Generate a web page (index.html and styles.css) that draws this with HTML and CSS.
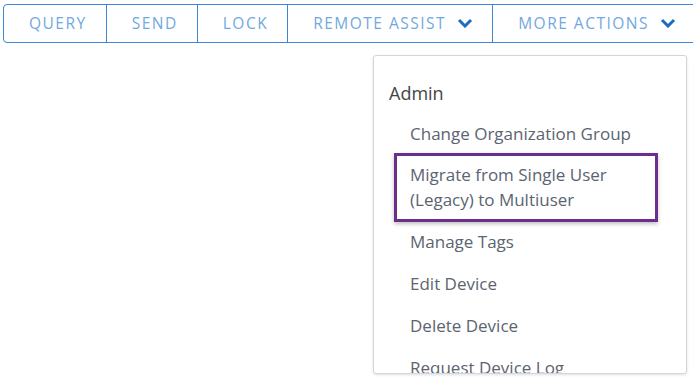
FILE: index.html
```html
<!DOCTYPE html>
<html lang="en">
<head>
  <meta charset="UTF-8">
  <meta name="viewport" content="width=device-width, initial-scale=1.0">
  <title>Device Actions</title>
  <link rel="stylesheet" href="styles.css">
</head>
<body>

<div class="toolbar">
  <button class="tool-btn">QUERY</button>
  <button class="tool-btn">SEND</button>
  <button class="tool-btn">LOCK</button>
  <button class="tool-btn">REMOTE ASSIST
    <svg class="chev" viewBox="0 0 16 10" width="16" height="10"><path d="M2 2l6 6 6-6" fill="none" stroke="currentColor" stroke-width="3"/></svg>
  </button>
  <button class="tool-btn last">MORE ACTIONS
    <svg class="chev" viewBox="0 0 16 10" width="16" height="10"><path d="M2 2l6 6 6-6" fill="none" stroke="currentColor" stroke-width="3"/></svg>
  </button>
</div>

<!-- More actions menu -->
<div class="menu-wrap">
  <div class="menu">
    <div class="menu-title">Admin</div>
    <a href="#" class="menu-item">Change Organization Group</a>
    <a href="#" class="menu-item highlight">Migrate from Single User<br>(Legacy) to Multiuser</a>
    <a href="#" class="menu-item">Manage Tags</a>
    <a href="#" class="menu-item">Edit Device</a>
    <a href="#" class="menu-item">Delete Device</a>
    <a href="#" class="menu-item">Request Device Log</a>
  </div>
</div>

</body>
</html>
```

FILE: styles.css
```css
body {
  font-family: "Open Sans", Arial, sans-serif;
  background-color: white;
  margin: 0;
  padding: 0;
  width: 693px;
  height: 377px;
  overflow: hidden;
}

.toolbar {
  display: flex;
  margin: 4px 0 0 3px;
  width: 720px;
  height: 39px;
  border: 1px solid #3d87d9;
  border-radius: 4px;
  box-sizing: border-box;
}

.tool-btn {
  display: flex;
  align-items: center;
  gap: 11px;
  padding: 0 19px 1px 25px;
  background: none;
  border: none;
  border-right: 1px solid #3d87d9;
  font-family: "Open Sans", Arial, sans-serif;
  font-size: 15.5px;
  letter-spacing: 1.5px;
  color: #72a8e0;
  cursor: pointer;
  white-space: nowrap;
}

.tool-btn.last {
  border-right: none;
}

.chev {
  color: #1c6cc4;
}

.menu-wrap {
  display: flex;
  padding: 12px 0 0 373px;
}

.menu {
  width: 314px;
  height: 319px;
  box-sizing: border-box;
  overflow: hidden;
  background-color: white;
  border: 1px solid #d6d6d6;
  border-radius: 3px;
  box-shadow: 0 1px 3px rgba(0, 0, 0, 0.12);
  padding: 22px 0 0 15px;
}

.menu-title {
  font-size: 18px;
  color: #444;
  line-height: 30px;
  margin-bottom: 13px;
}

.menu-item {
  display: block;
  color: #5b6470;
  text-decoration: none;
  font-size: 17px;
  line-height: 25px;
  padding: 0 0 17px 21px;
}

.menu-item.highlight {
  margin: -10px 0 7px 5px;
  padding: 6px 13px 7px 13px;
  width: 232px;
  border: 3px solid #6b2e8c;
  box-shadow: 0 2px 4px rgba(0, 0, 0, 0.25);
}
```
